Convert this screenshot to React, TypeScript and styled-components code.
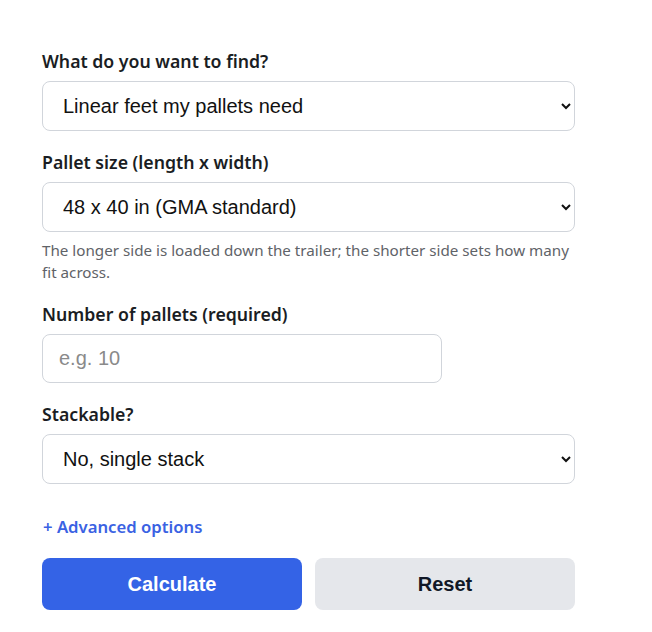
import React, { useState } from "react";
import styled, { createGlobalStyle } from "styled-components";

const GlobalStyle = createGlobalStyle`
  html, body {
    margin: 0;
    padding: 0;
    background: #ffffff;
  }
  * { box-sizing: border-box; }
`;

const Form = styled.form`
  width: 533px;
  margin: 49px 0 0 42px;
  display: flex;
  flex-direction: column;
  gap: 19px;
  font-family: "Noto Sans", "Open Sans", sans-serif;
`;

const Field = styled.div`
  display: flex;
  flex-direction: column;
`;

const Label = styled.label`
  font-size: 17.7px;
  line-height: 24px;
  font-weight: 600;
  color: #1a1d23;
  margin-bottom: 8px;
`;

const Select = styled.select`
  width: 100%;
  height: 50px;
  padding: 0 12px 0 16px;
  border: 1px solid #d1d5db;
  border-radius: 8px;
  background: #ffffff;
  font-family: "Liberation Sans", Arial, sans-serif;
  font-size: 20px;
  color: #111111;
`;

const Input = styled.input<{ $width?: number }>`
  width: ${(p) => (p.$width ? `${p.$width}px` : "100%")};
  height: 49px;
  padding: 0 16px;
  border: 1px solid #d1d5db;
  border-radius: 8px;
  background: #ffffff;
  font-family: "Liberation Sans", Arial, sans-serif;
  font-size: 20px;
  color: #111111;
  outline: none;
  &::placeholder { color: #8a8a8a; }
`;

const Hint = styled.p`
  margin: 7px 0 0;
  padding-top: 1px;
  font-size: 15.2px;
  line-height: 21.5px;
  color: #5f6368;
`;

const AdvancedToggle = styled.button`
  align-self: flex-start;
  margin-top: 12px;
  padding: 0 1px;
  border: none;
  background: none;
  font-family: "Noto Sans", "Open Sans", sans-serif;
  font-size: 16.7px;
  line-height: 24px;
  font-weight: 600;
  color: #3a62e3;
  cursor: pointer;
`;

const Actions = styled.div`
  display: grid;
  grid-template-columns: 1fr 1fr;
  gap: 13px;
`;

const ActionButton = styled.button<{ $primary?: boolean }>`
  height: 52px;
  border: none;
  border-radius: 8px;
  font-family: "Liberation Sans", Arial, sans-serif;
  font-size: 20px;
  font-weight: 700;
  cursor: pointer;
  background: ${(p) => (p.$primary ? "#3463e6" : "#e5e7eb")};
  color: ${(p) => (p.$primary ? "#ffffff" : "#111827")};
`;

export default function App() {
  const [mode, setMode] = useState("linear");
  const [size, setSize] = useState("48x40");
  const [count, setCount] = useState("");
  const [stack, setStack] = useState("no");

  return (
    <>
      <GlobalStyle />
      <Form onSubmit={(e) => e.preventDefault()}>
        <Field>
          <Label htmlFor="mode">What do you want to find?</Label>
          <Select id="mode" value={mode} onChange={(e) => setMode(e.target.value)}>
            <option value="linear">Linear feet my pallets need</option>
            <option value="fit">How many pallets fit</option>
          </Select>
        </Field>
        <Field>
          <Label htmlFor="size">Pallet size (length x width)</Label>
          <Select id="size" value={size} onChange={(e) => setSize(e.target.value)}>
            <option value="48x40">48 x 40 in (GMA standard)</option>
            <option value="48x48">48 x 48 in</option>
            <option value="42x42">42 x 42 in</option>
          </Select>
          <Hint>
            The longer side is loaded down the trailer; the shorter side sets how many fit across.
          </Hint>
        </Field>
        <Field>
          <Label htmlFor="count">Number of pallets (required)</Label>
          <Input
            id="count"
            $width={400}
            placeholder="e.g. 10"
            value={count}
            onChange={(e) => setCount(e.target.value)}
          />
        </Field>
        <Field>
          <Label htmlFor="stack">Stackable?</Label>
          <Select id="stack" value={stack} onChange={(e) => setStack(e.target.value)}>
            <option value="no">No, single stack</option>
            <option value="yes">Yes, double stack</option>
          </Select>
        </Field>
        <AdvancedToggle type="button">+ Advanced options</AdvancedToggle>
        <Actions>
          <ActionButton type="submit" $primary>Calculate</ActionButton>
          <ActionButton type="button">Reset</ActionButton>
        </Actions>
      </Form>
    </>
  );
}
